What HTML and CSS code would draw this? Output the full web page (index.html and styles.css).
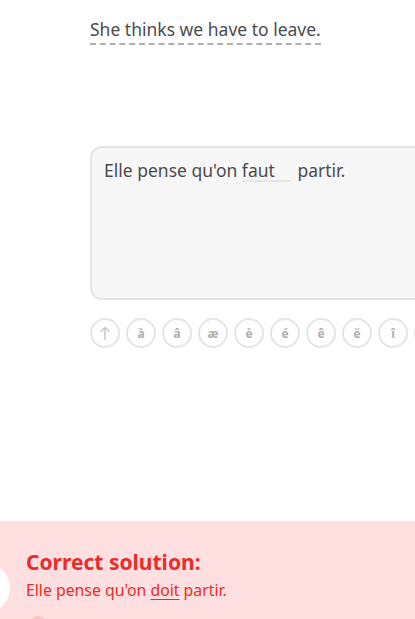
FILE: index.html
```html
<!DOCTYPE html>
<html>
<head>
<meta charset="utf-8">
<link rel="stylesheet" href="styles.css">
</head>
<body>
<main class="challenge">
  <div class="prompt"><span class="hint">She thinks we have to leave.</span></div>
  <div class="answer-box">
    <span class="line">Elle pense qu'on <span class="blank">faut</span> partir.</span>
  </div>
  <div class="keys">
    <span class="key key-shift"><svg width="10" height="14" viewBox="0 0 10 14"><path d="M5 13.5V1.5M1.2 5.3L5 1.5l3.8 3.8" fill="none" stroke="#c4c4c4" stroke-width="1.4" stroke-linecap="round" stroke-linejoin="round"/></svg></span>
    <span class="key">à</span>
    <span class="key">â</span>
    <span class="key">æ</span>
    <span class="key">è</span>
    <span class="key">é</span>
    <span class="key">ê</span>
    <span class="key">ë</span>
    <span class="key">î</span>
    <span class="key"></span>
  </div>
</main>
<footer class="feedback">
  <div class="badge"></div>
  <div class="feedback-text">
    <div class="title">Correct solution:</div>
    <div class="solution">Elle pense qu'on <u>doit</u> partir.</div>
  </div>
  <div class="btn-top"></div>
</footer>
</body>
</html>
```
FILE: styles.css
```css
html, body {
  margin: 0;
  padding: 0;
  width: 415px;
  height: 619px;
  overflow: hidden;
  background: #fff;
  font-family: "Noto Sans", sans-serif;
}
body {
  position: relative;
}
.challenge {
  padding-left: 90px;
  padding-top: 17px;
}
.prompt {
  font-size: 17.5px;
  color: #4b4b4b;
  line-height: 24px;
}
.hint {
  border-bottom: 2px dashed #b0b0b0;
  padding-bottom: 2px;
}
.answer-box {
  margin-top: 105px;
  width: 400px;
  box-sizing: border-box;
  height: 154px;
  border: 2px solid #e5e5e5;
  border-radius: 12px;
  background: #f7f7f7;
  padding: 10px 12px;
  font-size: 17.5px;
  line-height: 24px;
  color: #4b4b4b;
}
.blank {
  display: inline-block;
  width: 49px;
  border-bottom: 2px solid #e5e5e5;
  line-height: 20px;
  margin-right: 2px;
}
.keys {
  display: flex;
  gap: 6px;
  margin-top: 18px;
  width: 500px;
}
.key {
  flex: none;
  width: 30px;
  height: 30px;
  box-sizing: border-box;
  border: 2px solid #e5e5e5;
  border-radius: 15px;
  display: flex;
  align-items: center;
  justify-content: center;
  font-size: 12px;
  font-weight: 700;
  color: #afafaf;
}
.feedback {
  position: absolute;
  left: 0;
  top: 521px;
  width: 415px;
  height: 120px;
  background: #ffdfe0;
  display: flex;
}
.badge {
  position: absolute;
  left: -40px;
  top: 42px;
  width: 50px;
  height: 50px;
  border-radius: 50%;
  background: #fff;
}
.feedback-text {
  padding: 26px 0 0 26px;
  color: #ea2b2b;
}
.title {
  font-size: 21px;
  font-weight: 700;
  line-height: 30px;
}
.solution {
  font-size: 15.8px;
  line-height: 22px;
  margin-top: 2px;
}
.solution u {
  text-underline-offset: 3px;
}
.btn-top {
  position: absolute;
  left: 30px;
  top: 95px;
  width: 16px;
  height: 16px;
  border-radius: 50%;
  background: #ffc1c1;
}
```
